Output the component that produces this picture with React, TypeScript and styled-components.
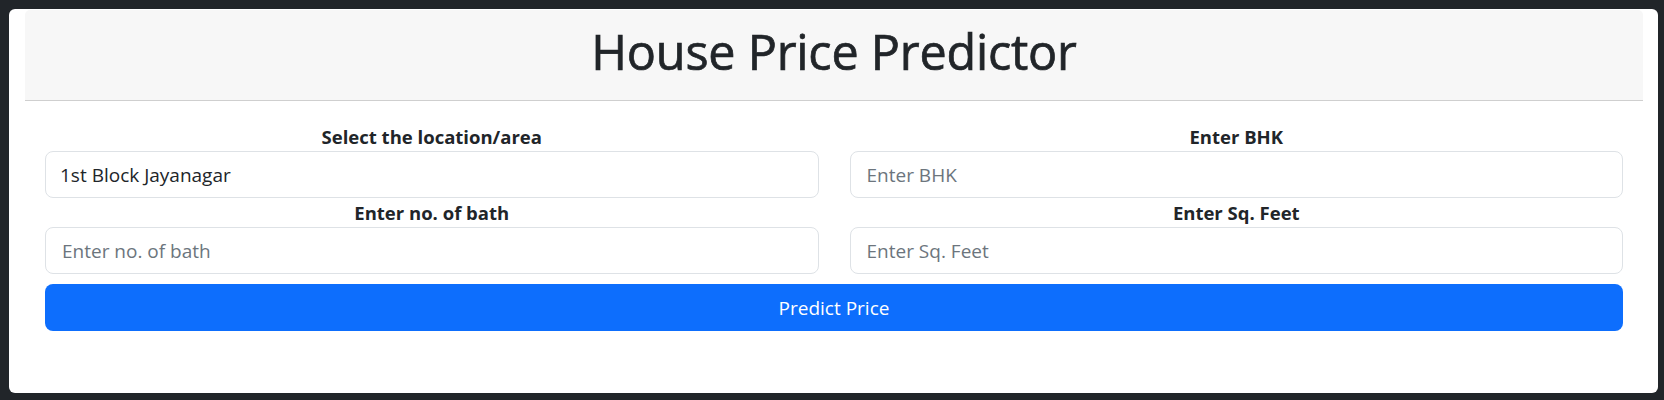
import React from "react";
import styled, { createGlobalStyle } from "styled-components";

const GlobalStyle = createGlobalStyle`
  html, body {
    margin: 0;
    padding: 0;
    background: #212529;
  }
  body {
    font-family: "Open Sans", "Noto Sans", "Liberation Sans", sans-serif;
    color: #212529;
  }
  * { box-sizing: border-box; }
`;

const Page = styled.div`
  padding: 9px 6px 7px 9px;
`;

const Card = styled.div`
  background: #ffffff;
  border-radius: 6px;
  padding: 1px 15px 0 16px;
  height: 384px;
`;

const Header = styled.header`
  height: 91px;
  background: #f7f7f7;
  border-bottom: 1px solid #cfcfcf;
  border-radius: 5px 5px 0 0;
  display: flex;
  align-items: center;
  justify-content: center;
  padding-bottom: 9px;
`;

const Title = styled.h1`
  margin: 0;
  font-size: 48.5px;
  font-weight: 400;
  letter-spacing: -0.2px;
  -webkit-text-stroke: 0.7px #212529;
  color: #212529;
`;

const Body = styled.div`
  padding: 21px 20px 0 20px;
`;

const Grid = styled.div`
  display: grid;
  grid-template-columns: 1fr 1fr;
  column-gap: 31px;
`;

const Field = styled.div`
  display: flex;
  flex-direction: column;
`;

const Label = styled.label`
  display: block;
  text-align: center;
  font-weight: 700;
  font-size: 18.5px;
  line-height: 29px;
  color: #212529;
`;

const Input = styled.input`
  width: 100%;
  height: 47px;
  padding: 0 16px;
  font-family: inherit;
  font-size: 19px;
  color: #212529;
  background: #fff;
  border: 1px solid #dee2e6;
  border-radius: 8px;
  outline: none;
  &::placeholder {
    color: #6c757d;
  }
`;

const Select = styled.select`
  width: 100%;
  height: 47px;
  padding: 0 14px;
  font-family: inherit;
  font-size: 19px;
  color: #212529;
  background: #fff;
  border: 1px solid #dee2e6;
  border-radius: 8px;
  outline: none;
  appearance: none;
  -webkit-appearance: none;
`;

const Button = styled.button`
  display: block;
  width: 100%;
  height: 47px;
  margin-top: 10px;
  border: none;
  border-radius: 8px;
  background: #0d6efd;
  color: #ffffff;
  font-family: inherit;
  font-size: 19px;
  cursor: pointer;
`;

export default function App() {
  return (
    <>
      <GlobalStyle />
      <Page>
        <Card>
          <Header>
            <Title>House Price Predictor</Title>
          </Header>
          <Body>
            <Grid>
              <Field>
                <Label>Select the location/area</Label>
                <Select defaultValue="1st Block Jayanagar">
                  <option>1st Block Jayanagar</option>
                  <option>1st Phase JP Nagar</option>
                  <option>2nd Phase Judicial Layout</option>
                </Select>
              </Field>
              <Field>
                <Label>Enter BHK</Label>
                <Input type="text" placeholder="Enter BHK" />
              </Field>
              <Field>
                <Label>Enter no. of bath</Label>
                <Input type="text" placeholder="Enter no. of bath" />
              </Field>
              <Field>
                <Label>Enter Sq. Feet</Label>
                <Input type="text" placeholder="Enter Sq. Feet" />
              </Field>
            </Grid>
            <Button type="button">Predict Price</Button>
          </Body>
        </Card>
      </Page>
    </>
  );
}
